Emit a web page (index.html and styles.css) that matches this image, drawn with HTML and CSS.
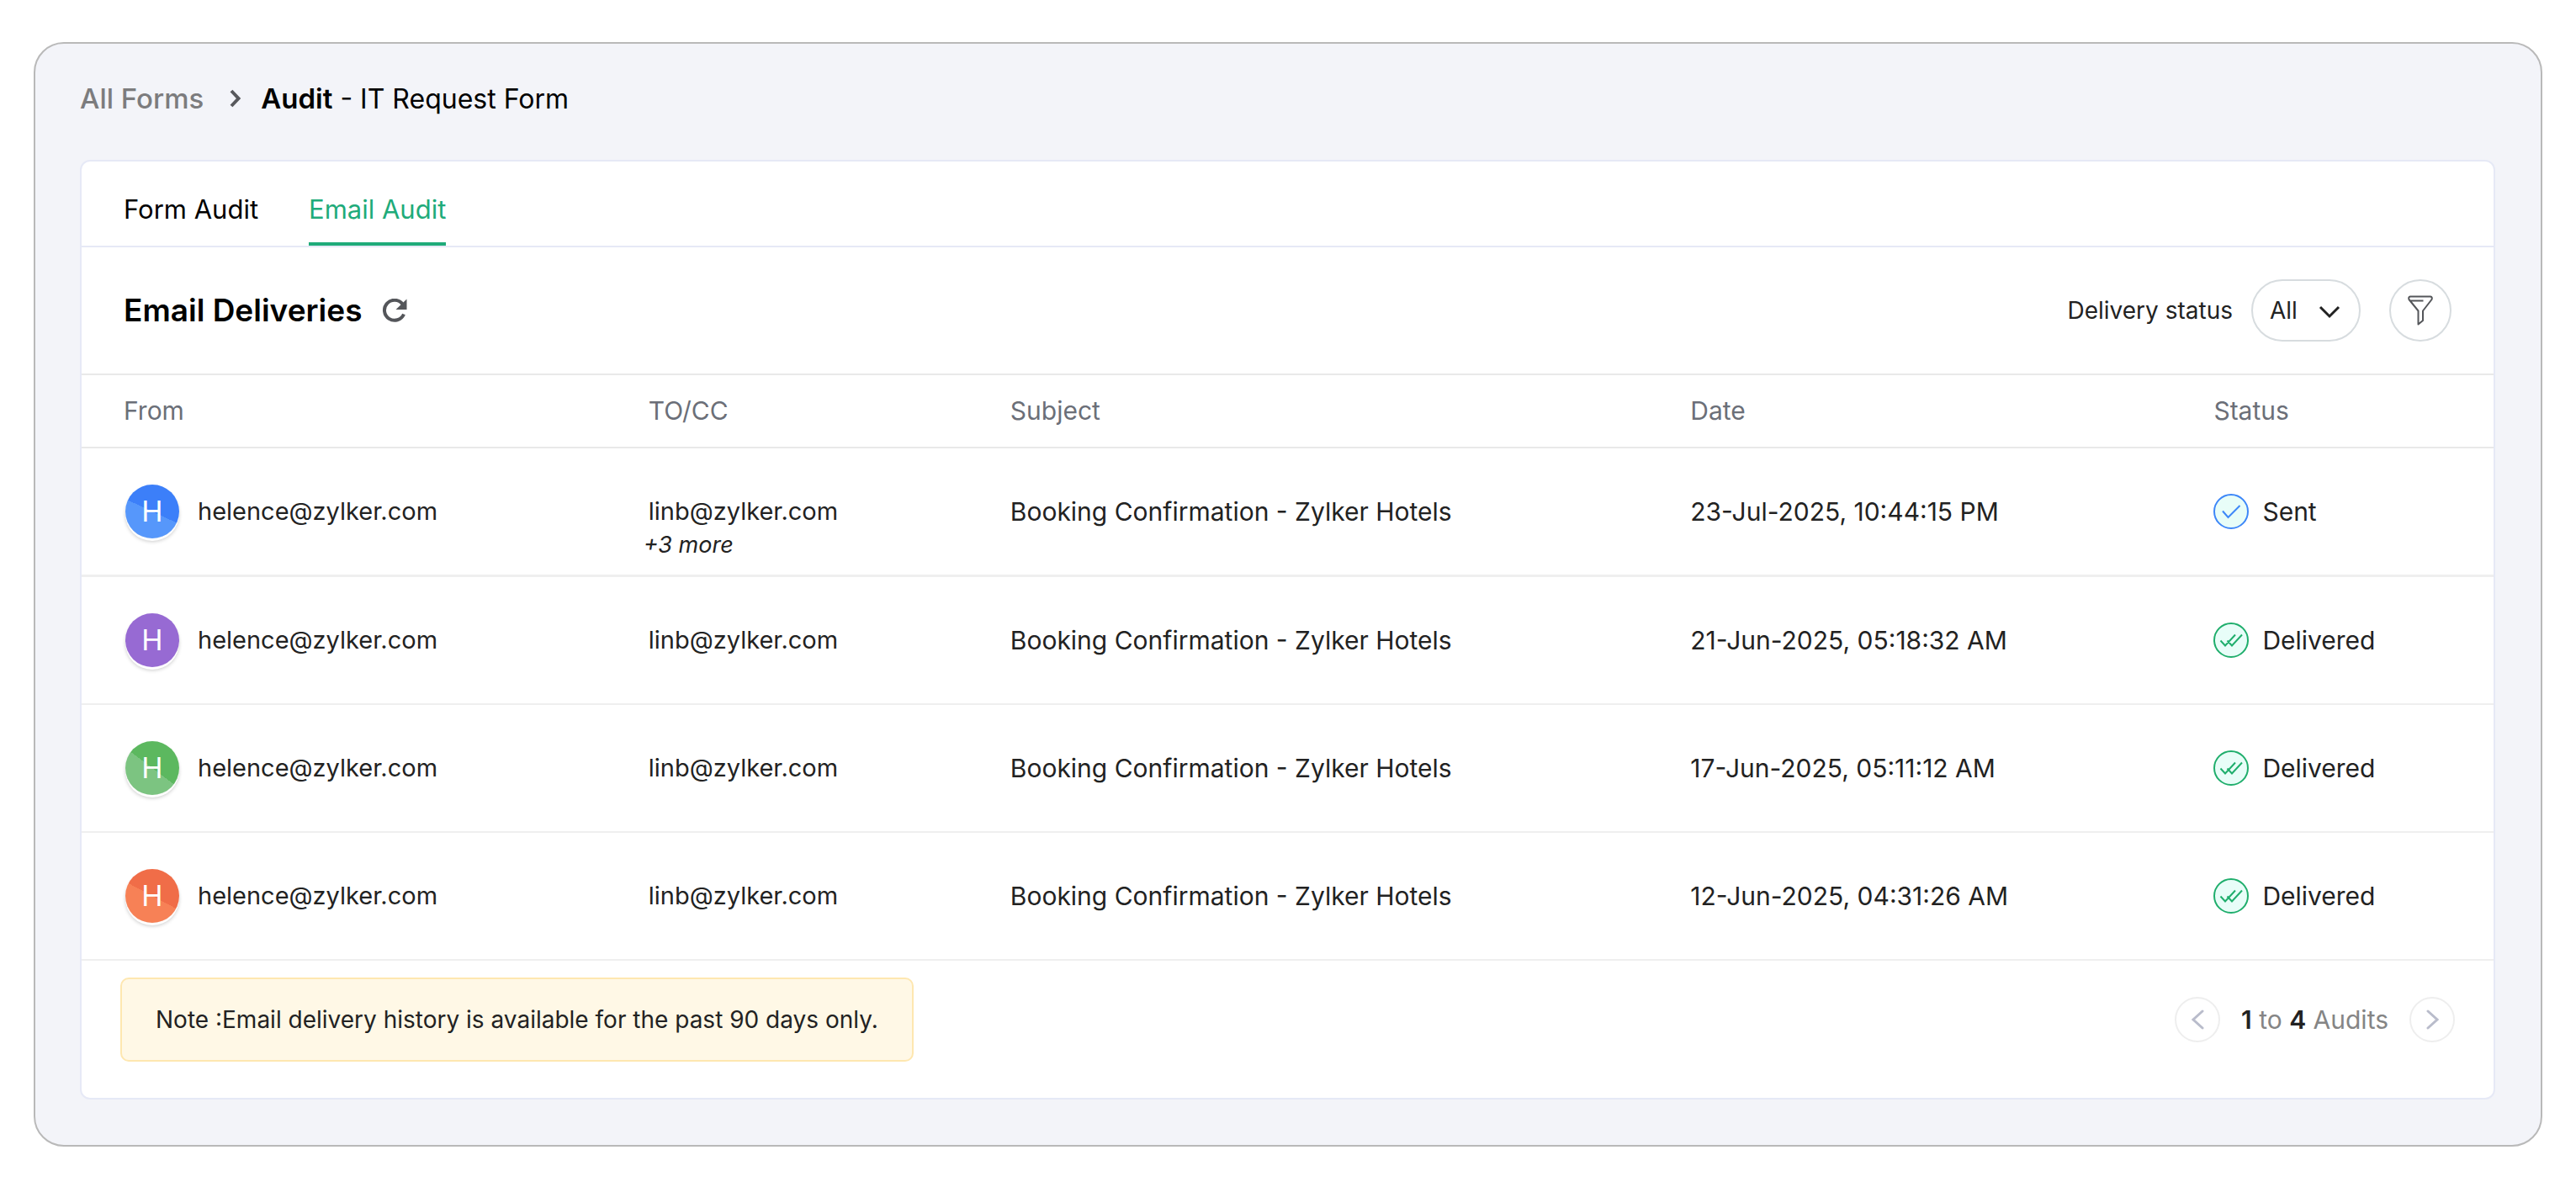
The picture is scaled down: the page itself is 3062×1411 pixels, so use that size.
FILE: index.html
```html
<!DOCTYPE html>
<html lang="en">
<head>
<meta charset="utf-8">
<title>Audit - IT Request Form</title>
<link rel="stylesheet" href="styles.css">
</head>
<body>
<main class="frame">
  <nav class="breadcrumb" aria-label="Breadcrumb">
    <a class="crumb-link" href="#">All Forms</a>
    <svg class="crumb-arrow" viewBox="0 0 16 24" aria-hidden="true"><path d="M3 3 L11.500 12 L3 21" fill="none" stroke="#58595d" stroke-width="4"/></svg>
    <h1 class="crumb-title"><strong>Audit</strong> - IT Request Form</h1>
  </nav>

  <section class="panel">
    <nav class="tabs" aria-label="Audit type">
      <a class="tab" href="#">Form Audit</a>
      <a class="tab active" href="#" aria-current="page">Email Audit</a>
    </nav>

    <header class="toolbar">
      <h2 class="heading">Email Deliveries</h2>
      <button class="refresh" type="button" aria-label="Refresh">
        <svg viewBox="0 0 30 28" aria-hidden="true"><path d="M24.500 6.500 A12 12 0 1 0 26 18.500" fill="none" stroke="#54565a" stroke-width="4"/><path d="M29.500 0.500 V13 H16.500 Z" fill="#54565a"/></svg>
      </button>
      <label class="status-label" for="status">Delivery status</label>
      <span class="select-wrap">
        <select class="status-select" id="status"><option>All</option><option>Sent</option><option>Delivered</option></select>
        <svg class="select-arrow" viewBox="0 0 26 16" aria-hidden="true"><path d="M2 2 L13 13 L24 2" fill="none" stroke="#222" stroke-width="3"/></svg>
      </span>
      <button class="filter" type="button" aria-label="Filter">
        <svg viewBox="0 0 30 36" aria-hidden="true"><path d="M3 1.500 H27 Q29.500 2 28.500 5 L18 18.500 V30 L12.500 34.500 V18.500 L1.500 5 Q0.500 2 3 1.500 Z M3.500 6.500 H18.500" fill="none" stroke="#54565a" stroke-width="2" stroke-linejoin="round"/></svg>
      </button>
    </header>

    <table class="audits">
      <thead>
        <tr><th class="col-from">From</th><th class="col-to">TO/CC</th><th class="col-subject">Subject</th><th class="col-date">Date</th><th class="col-status">Status</th></tr>
      </thead>
      <tbody>
        <tr>
          <td class="email"><div class="sender"><span class="avatar blue">H</span>helence@zylker.com</div></td>
          <td class="email"><div class="recipient">linb@zylker.com<em class="more">+3 more</em></div></td>
          <td>Booking Confirmation - Zylker Hotels</td>
          <td>23-Jul-2025, 10:44:15 PM</td>
          <td><div class="state"><svg class="state-icon sent" viewBox="0 0 42 42" aria-hidden="true"><circle cx="21" cy="21" r="20"/><path d="M11 20.500 L17.500 28 L31.500 14"/></svg>Sent</div></td>
        </tr>
        <tr>
          <td class="email"><div class="sender"><span class="avatar purple">H</span>helence@zylker.com</div></td>
          <td class="email">linb@zylker.com</td>
          <td>Booking Confirmation - Zylker Hotels</td>
          <td>21-Jun-2025, 05:18:32 AM</td>
          <td><div class="state"><svg class="state-icon delivered" viewBox="0 0 42 42" aria-hidden="true"><circle cx="21" cy="21" r="20"/><path d="M8.500 21.500 L14 27.500 L26 14.500 M16.500 21.500 L22 27.500 L34 14.500"/></svg>Delivered</div></td>
        </tr>
        <tr>
          <td class="email"><div class="sender"><span class="avatar green">H</span>helence@zylker.com</div></td>
          <td class="email">linb@zylker.com</td>
          <td>Booking Confirmation - Zylker Hotels</td>
          <td>17-Jun-2025, 05:11:12 AM</td>
          <td><div class="state"><svg class="state-icon delivered" viewBox="0 0 42 42" aria-hidden="true"><circle cx="21" cy="21" r="20"/><path d="M8.500 21.500 L14 27.500 L26 14.500 M16.500 21.500 L22 27.500 L34 14.500"/></svg>Delivered</div></td>
        </tr>
        <tr>
          <td class="email"><div class="sender"><span class="avatar orange">H</span>helence@zylker.com</div></td>
          <td class="email">linb@zylker.com</td>
          <td>Booking Confirmation - Zylker Hotels</td>
          <td>12-Jun-2025, 04:31:26 AM</td>
          <td><div class="state"><svg class="state-icon delivered" viewBox="0 0 42 42" aria-hidden="true"><circle cx="21" cy="21" r="20"/><path d="M8.500 21.500 L14 27.500 L26 14.500 M16.500 21.500 L22 27.500 L34 14.500"/></svg>Delivered</div></td>
        </tr>
      </tbody>
    </table>

    <footer class="footer">
      <p class="note">Note :Email delivery history is available for the past 90 days only.</p>
      <div class="pager">
        <button class="page-button" type="button" aria-label="Previous page"><svg viewBox="0 0 16 24" aria-hidden="true"><path d="M14 2 L3 12 L14 22"/></svg></button>
        <span class="range"><b>1</b> to <b>4</b> Audits</span>
        <button class="page-button" type="button" aria-label="Next page"><svg viewBox="0 0 16 24" aria-hidden="true"><path d="M3 2 L14 12 L3 22"/></svg></button>
      </div>
    </footer>
  </section>
</main>
</body>
</html>
```

FILE: styles.css
```css
* {
  box-sizing: border-box;
}

body {
  margin: 0;
  padding: 50px 40px;
  background: #fff;
  color: #222;
  font-family: Inter, "Liberation Sans", sans-serif;
  font-size: 30px;
  line-height: 40px;
}

button {
  padding: 0;
  background: none;
  border: 0;
}

svg {
  display: block;
}

a {
  text-decoration: none;
}

.frame {
  padding: 0 54px 54px 53px;
  background: #f3f4f9;
  border: 2px solid #b9b9b9;
  border-radius: 36px;
}

.breadcrumb {
  display: flex;
  align-items: center;
  height: 138px;
  padding-bottom: 8px;
}

.crumb-link {
  color: #7c7c7e;
  font-size: 33px;
  font-weight: 500;
}

.crumb-arrow {
  width: 16px;
  height: 24px;
  margin: 0 22px 0 30px;
}

.crumb-title {
  margin: 0;
  color: #000;
  font-size: 32px;
  font-weight: 400;
}

.crumb-title strong {
  font-size: 33px;
  font-weight: 600;
}

.panel {
  background: #fff;
  border: 2px solid #e6e9f6;
  border-radius: 12px;
}

.tabs {
  display: flex;
  gap: 60px;
  height: 102px;
  padding-left: 50px;
  border-bottom: 2px solid #e6e9f6;
  font-size: 31px;
}

.tab {
  padding-top: 37px;
  color: #000;
}

.tab.active {
  color: #1fab7a;
  border-bottom: 4px solid #1fab7a;
}

.toolbar {
  display: flex;
  align-items: center;
  height: 152px;
  padding: 0 50px;
  border-bottom: 2px solid #e9e9e9;
}

.heading {
  margin: 0;
  color: #000;
  font-size: 37px;
  font-weight: 600;
}

.refresh {
  margin-left: 24px;
}

.refresh svg {
  width: 30px;
  height: 28px;
}

.status-label {
  margin-left: auto;
  font-size: 28px;
}

.select-wrap {
  display: grid;
  align-items: center;
  width: 130px;
  height: 74px;
  margin: 0 34px 0 22px;
}

.status-select {
  grid-area: 1 / 1;
  width: 100%;
  height: 100%;
  padding: 0 20px;
  appearance: none;
  background: #fff;
  border: 2px solid #d7dcdf;
  border-radius: 38px;
  color: #222;
  font: inherit;
  font-size: 28px;
}

.select-arrow {
  grid-area: 1 / 1;
  justify-self: end;
  width: 26px;
  height: 16px;
  margin: 4px 24px 0 0;
  pointer-events: none;
}

.filter {
  display: grid;
  place-items: center;
  width: 74px;
  height: 74px;
  border: 2px solid #d7dcdf;
  border-radius: 50%;
}

.filter svg {
  width: 30px;
  height: 36px;
}

.audits {
  width: 100%;
  border-collapse: separate;
  border-spacing: 0;
  table-layout: fixed;
}

.audits th {
  height: 87px;
  padding: 0 0 2px;
  border-bottom: 2px solid #e9e9e9;
  color: #6b6f78;
  font-weight: 400;
  text-align: left;
}

.audits td {
  height: 152px;
  padding: 0;
  border-bottom: 2px solid #efefef;
}

.audits tbody tr:first-child td {
  height: 153px;
  border-bottom-width: 3px;
}

.audits .email {
  font-size: 29px;
}

.audits th:first-child,
.audits td:first-child {
  padding-left: 50px;
}

.col-from {
  width: 23.5%;
}

.col-to {
  width: 15%;
}

.col-subject {
  width: 28.2%;
}

.col-date {
  width: 21.7%;
}

.sender {
  display: flex;
  align-items: center;
  gap: 22px;
  padding-left: 2px;
}

.avatar {
  width: 64px;
  height: 64px;
  border-radius: 50%;
  box-shadow: 0 3px 0 #fff, 0 4px 4px #ccc;
  color: #fff;
  font-size: 34px;
  line-height: 64px;
  text-align: center;
}

.blue {
  background: linear-gradient(205deg, #3c7ff9 50%, #5697fb 50%);
}

.purple {
  background: #976ad3;
}

.green {
  background: linear-gradient(217deg, #5cb85f 50%, #7cc481 50%);
}

.orange {
  background: linear-gradient(208deg, #f06d48 50%, #f78156 50%);
}

.recipient {
  position: relative;
}

.more {
  position: absolute;
  top: 100%;
  left: -6px;
  font-size: 27px;
}

.state {
  display: flex;
  align-items: center;
  gap: 16px;
}

.state-icon {
  width: 42px;
  height: 42px;
  fill: #e8fdf8;
  stroke-width: 2;
}

.state-icon path {
  fill: none;
}

.sent {
  stroke: #3d87f8;
}

.delivered {
  stroke: #1fae6c;
}

.footer {
  display: flex;
  align-items: flex-start;
  justify-content: space-between;
  padding: 20px 46px 43px;
}

.note {
  margin: 0;
  padding: 28px 40px;
  background: #fff8e6;
  border: 2px solid #fee7b0;
  border-radius: 10px;
  font-size: 28px;
}

.pager {
  display: flex;
  align-items: center;
  height: 100px;
}

.page-button {
  display: grid;
  place-items: center;
  width: 54px;
  height: 54px;
  border: 2px solid #eee;
  border-radius: 50%;
}

.page-button svg {
  width: 16px;
  height: 24px;
  fill: none;
  stroke: #b9bccb;
  stroke-width: 3;
  stroke-linecap: round;
}

.range {
  margin: 0 25px;
  color: #858585;
}

.range b {
  color: #222;
  font-weight: 600;
}
```
